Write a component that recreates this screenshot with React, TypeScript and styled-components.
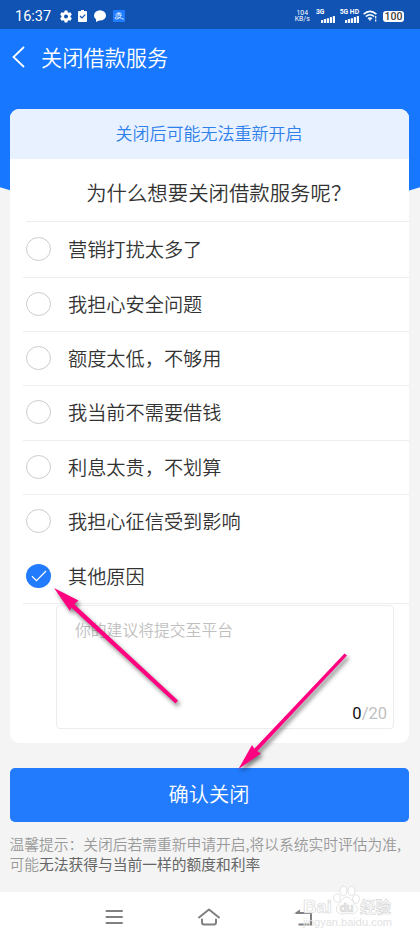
import { useState } from "react";
import styled, { createGlobalStyle } from "styled-components";

const GlobalStyle = createGlobalStyle`
  * {
    box-sizing: border-box;
  }

  body {
    margin: 0;
    background: #f4f4f4;
    font-family: "Noto Sans CJK SC", "Noto Sans", sans-serif;
    font-weight: 350;
  }
`;

const Screen = styled.div`
  position: relative;
  display: flex;
  flex-direction: column;
  width: 420px;
  height: 940px;
  overflow: hidden;
  background: #f4f4f4;
`;

const Backdrop = styled.svg`
  position: absolute;
  top: 0;
  left: 0;
`;

const StatusBar = styled.div`
  position: relative;
  display: flex;
  align-items: center;
  justify-content: space-between;
  height: 29px;
  padding: 3px 16px 0 15px;
  background: #1053b3;
  color: #fff;
`;

const StatusGroup = styled.div<{ $gap: number }>`
  display: flex;
  align-items: center;
  gap: ${(p) => p.$gap}px;
`;

const Clock = styled.span`
  width: 36px;
  margin-right: 2px;
  padding-top: 2px;
  font-family: Roboto, sans-serif;
  font-size: 14.5px;
  font-weight: 400;
  line-height: 20px;
`;

const NetSpeed = styled.div`
  display: flex;
  flex-direction: column;
  align-items: center;
  width: 14px;
  margin-right: 2px;
  font: 6.8px/6.5px Roboto, sans-serif;
  white-space: nowrap;
`;

const Signal = styled.div`
  display: flex;
  flex-direction: column;
  width: 19px;
  font: 700 6.8px/7px Roboto, sans-serif;
  white-space: nowrap;

  svg {
    align-self: flex-end;
  }
`;

const Battery = styled.div`
  width: 21px;
  height: 11px;
  border-radius: 3px;
  background: #fff;
  color: #444;
  font: 500 10.5px/12px Roboto, sans-serif;
  text-align: center;
`;

const Header = styled.header`
  position: relative;
  display: flex;
  align-items: center;
  gap: 16px;
  height: 80px;
  padding: 0 0 24px 12px;
  color: #fff;
`;

const HeaderTitle = styled.h1`
  margin: 0;
  font-size: 21.2px;
  font-weight: 350;
  line-height: 28px;
`;

const Card = styled.section`
  position: relative;
  height: 634px;
  margin: 0 11.5px 0 9.5px;
  border-radius: 9px;
  overflow: hidden;
  background: #fff;
`;

const Banner = styled.div`
  height: 50px;
  background: #e7f1ff;
  color: #2f80ea;
  font-size: 17px;
  line-height: 48px;
  text-align: center;
`;

const Question = styled.h2`
  height: 63px;
  margin: 0 0 0 16.5px;
  padding-left: 3px;
  border-bottom: 1px solid #eee;
  color: #333;
  font-size: 20.4px;
  font-weight: 350;
  line-height: 67px;
  text-align: center;
`;

const Option = styled.div<{ $divider: boolean }>`
  display: flex;
  align-items: center;
  gap: 17px;
  height: 54.4px;
  margin-left: 13.5px;
  padding: 0 0 1.4px 3px;
  border-bottom: 1px solid ${(p) => (p.$divider ? "#eee" : "transparent")};
  color: #333;
  font-size: 19.2px;
  line-height: 28px;
  cursor: pointer;
`;

const Options = styled.div`
  padding-top: 1.2px;
`;

const Comment = styled.div`
  display: flex;
  flex-direction: column;
  justify-content: space-between;
  width: 338px;
  height: 124px;
  margin: 1px 0 0 46.5px;
  padding: 12px 6px 2px 18px;
  border: 1px solid #ececec;
  border-radius: 4px;
  color: #bfbfbf;
  font-size: 15.8px;
  line-height: 24px;
`;

const Counter = styled.div`
  align-self: flex-end;
  font-family: Roboto, sans-serif;
  font-size: 16.5px;
  font-weight: 400;

  span {
    color: #111;
  }
`;

const ConfirmButton = styled.button`
  height: 54px;
  margin: 25px 11.5px 0 9.5px;
  padding: 0 0 2px;
  border: 0;
  border-radius: 5px;
  background: #227bfd;
  color: #fff;
  font-family: inherit;
  font-size: 20.2px;
  font-weight: 350;
  line-height: 50px;
`;

const Notice = styled.p`
  flex: 1;
  margin: 0;
  padding: 12px 0 0 9.5px;
  color: #999;
  font-size: 14.75px;
  line-height: 20px;
  white-space: nowrap;

  strong {
    color: #666;
    font-weight: 400;
  }
`;

const NavBar = styled.nav`
  display: flex;
  align-items: center;
  gap: 73px;
  height: 48px;
  padding: 2px 0 0 104px;
  background: #fff;
`;

const Arrows = styled.svg`
  position: absolute;
  top: 580px;
  left: 45px;
  filter: drop-shadow(2px 3px 2px rgba(0, 0, 0, 0.5));
  pointer-events: none;
`;

const Watermark = styled.svg`
  position: absolute;
  top: 880px;
  left: 296px;
`;

const reasons = [
  "营销打扰太多了",
  "我担心安全问题",
  "额度太低，不够用",
  "我当前不需要借钱",
  "利息太贵，不划算",
  "我担心征信受到影响",
  "其他原因",
];

const Radio = ({ checked }: { checked: boolean }) => (
  <svg width="25" height="24" viewBox="0 0 25 24">
    {checked ? (
      <>
        <ellipse cx="12.5" cy="12" rx="12.5" ry="12" fill="#227bfd" />
        <path d="M6 12.2l4.5 4.5L20 7" fill="none" stroke="#fff" strokeWidth="1.3" />
      </>
    ) : (
      <ellipse cx="12.5" cy="12" rx="12" ry="11.5" fill="#fff" stroke="#ccc" />
    )}
  </svg>
);

const Bars = () => (
  <svg width="14" height="7" viewBox="0 0 14 7" fill="#fff">
    <rect x="0" y="4" width="2.2" height="3" rx=".5" />
    <rect x="2.9" y="3" width="2.2" height="4" rx=".5" />
    <rect x="5.8" y="2.3" width="2.2" height="4.7" rx=".5" />
    <rect x="8.8" y="1" width="2.2" height="6" rx=".5" />
    <rect x="11.8" y="0" width="2.2" height="7" rx=".5" />
  </svg>
);

const GearIcon = () => (
  <svg width="12" height="13" viewBox="0 0 24 24" fill="#fff">
    <path
      fillRule="evenodd"
      d="M9.3 0h5.4l.8 3.6 2 1.1 3.5-1.1 2.7 4.8-2.7 2.4v2.4l2.7 2.4-2.7 4.8-3.5-1.1-2 1.1-.8 3.6H9.3l-.8-3.6-2-1.1L3 20.4.3 15.6 3 13.2v-2.4L.3 8.4 3 3.6l3.5 1.1 2-1.1zM12 8a4 4 0 100 8 4 4 0 000-8z"
    />
  </svg>
);

const TaskIcon = () => (
  <svg width="9" height="12" viewBox="0 0 9 12">
    <path d="M1 1h2V0h3v1h2a1 1 0 011 1v9a1 1 0 01-1 1H1a1 1 0 01-1-1V2a1 1 0 011-1z" fill="#fff" />
    <path d="M2 6l2 2 3.2-3.4" fill="none" stroke="#1053b3" strokeWidth="1.2" />
  </svg>
);

const ChatIcon = () => (
  <svg width="12" height="12" viewBox="0 0 12 12" fill="#fff">
    <ellipse cx="6" cy="5.4" rx="6" ry="5.2" />
    <path d="M2 8v4l4-2z" />
  </svg>
);

const AlipayIcon = () => (
  <svg width="12" height="12" viewBox="0 0 12 12">
    <rect width="12" height="12" rx=".6" fill="#1f7bff" />
    <path
      d="M3.4 3.3h5M2.4 5h6.400M5.900 2V5M8 5C7.400 7.600 5 9.200 3.300 9 1.600 8.700 1.900 7 3.600 6.900c2 0 4.400 1.400 7.200 2.300"
      fill="none"
      stroke="#fff"
      strokeWidth=".8"
    />
  </svg>
);

const WifiIcon = () => (
  <svg width="15" height="12" viewBox="0 0 15 12" fill="none" stroke="#fff" strokeWidth="1.6">
    <path d="M.6 4.2Q7 -1.5 13.4 4.2M2.8 6.5Q7 3 11.2 6.5M5 8.7Q7 7.2 9 8.7" />
    <path d="M5.5 9.2h3L7 11z" fill="#fff" stroke="none" />
    <path d="M12.7 6v2.5M12.7 9.5v2" strokeWidth="1.2" />
  </svg>
);

const BaiduMark = () => (
  <Watermark width="104" height="50" viewBox="0 0 104 50">
    <g
      fill="#fff"
      fillOpacity="0.85"
      stroke="#d9d9d9"
      strokeWidth="0.7"
      fontFamily="Liberation Sans, Noto Sans CJK SC, sans-serif"
      fontWeight="700"
    >
      <text x="7" y="33" fontSize="19" textLength="29" lengthAdjust="spacingAndGlyphs">
        Bai
      </text>
      <ellipse cx="41" cy="18" rx="3.3" ry="4.3" />
      <ellipse cx="47.5" cy="11" rx="3.5" ry="4.7" />
      <ellipse cx="55.5" cy="11" rx="3.5" ry="4.7" />
      <ellipse cx="60" cy="19" rx="3.3" ry="4.3" />
      <path d="M50.5 17c4 0 6 4.5 8.5 7.5 5 5 1 9.5-3.5 9.5-3-.5-6-.5-9 0-5 0-9-4-4-9.5 3-2.5 4-7.5 8-7.500z" />
      <text x="43.5" y="32" fontSize="12" textLength="14" fill="#e4e4e4">
        du
      </text>
      <text x="64" y="33" fontSize="15.5" textLength="31">
        经验
      </text>
    </g>
    <text
      x="7"
      y="46"
      fill="#e2e2e2"
      fontFamily="Liberation Sans, sans-serif"
      fontSize="10"
      textLength="89"
      lengthAdjust="spacingAndGlyphs"
    >
      jingyan.baidu.com
    </text>
  </Watermark>
);

const App = () => {
  const [selected, setSelected] = useState(reasons.length - 1);

  return (
    <Screen>
      <GlobalStyle />
      <Backdrop width="420" height="240">
        <path d="M0 0H420V187.3Q210 254 0 187.3Z" fill="#1777ff" />
      </Backdrop>
      <StatusBar>
        <StatusGroup $gap={6.7}>
          <Clock>16:37</Clock>
          <GearIcon />
          <TaskIcon />
          <ChatIcon />
          <AlipayIcon />
        </StatusGroup>
        <StatusGroup $gap={4.7}>
          <NetSpeed>
            <span>104</span>
            <span>KB/s</span>
          </NetSpeed>
          <Signal>
            3G
            <Bars />
          </Signal>
          <Signal>
            5G HD
            <Bars />
          </Signal>
          <WifiIcon />
          <Battery>100</Battery>
        </StatusGroup>
      </StatusBar>
      <Header>
        <svg width="13" height="22" viewBox="0 0 13 22" fill="none" stroke="#fff" strokeWidth="1.8">
          <path d="M12 1L1.5 11 12 21" />
        </svg>
        <HeaderTitle>关闭借款服务</HeaderTitle>
      </Header>
      <Card>
        <Banner>关闭后可能无法重新开启</Banner>
        <Question>为什么想要关闭借款服务呢？</Question>
        <Options>
          {reasons.map((reason, index) => (
            <Option
              key={reason}
              $divider={index !== reasons.length - 2}
              onClick={() => setSelected(index)}
            >
              <Radio checked={index === selected} />
              {reason}
            </Option>
          ))}
        </Options>
        <Comment>
          你的建议将提交至平台
          <Counter>
            <span>0</span>/20
          </Counter>
        </Comment>
      </Card>
      <ConfirmButton>确认关闭</ConfirmButton>
      <Notice>
        温馨提示：关闭后若需重新申请开启,将以系统实时评估为准,
        <br />
        可能<strong>无法获得与当前一样的额度和利率</strong>
      </Notice>
      <NavBar>
        <svg width="20" height="16" viewBox="0 0 20 16" stroke="#808080" strokeWidth="2" strokeLinecap="round">
          <path d="M2.5 2h15.5M2.5 8h15.5M2.5 14h15.5" />
        </svg>
        <svg
          width="24"
          height="18"
          viewBox="0 0 24 18"
          fill="none"
          stroke="#808080"
          strokeWidth="2"
          strokeLinecap="round"
          strokeLinejoin="round"
        >
          <path d="M2 9.5L12 1.5l10 8M5 11.5v3q0 2 2 2h10q2 0 2-2v-3" />
        </svg>
        <svg width="20" height="18" viewBox="0 0 20 18" fill="none" stroke="#808080" strokeWidth="2">
          <path d="M2 5h15v11.5H4.5" />
          <path d="M0 5.5L6 1.5V5.5z" fill="#808080" stroke="none" />
        </svg>
      </NavBar>
      <Arrows width="310" height="200" viewBox="45 580 310 200" fill="#ff0080">
        <path d="M54 588L78.5 600.5 74.3 604.3 178 700.5 175.5 703.5 71.3 607.5 70 611Z" />
        <path d="M347 655.5L257.3 751.3 261 753.5 238.5 769 252 745 254.3 748.700 344.5 653.5Z" />
      </Arrows>
      <BaiduMark />
    </Screen>
  );
};

export default App;
